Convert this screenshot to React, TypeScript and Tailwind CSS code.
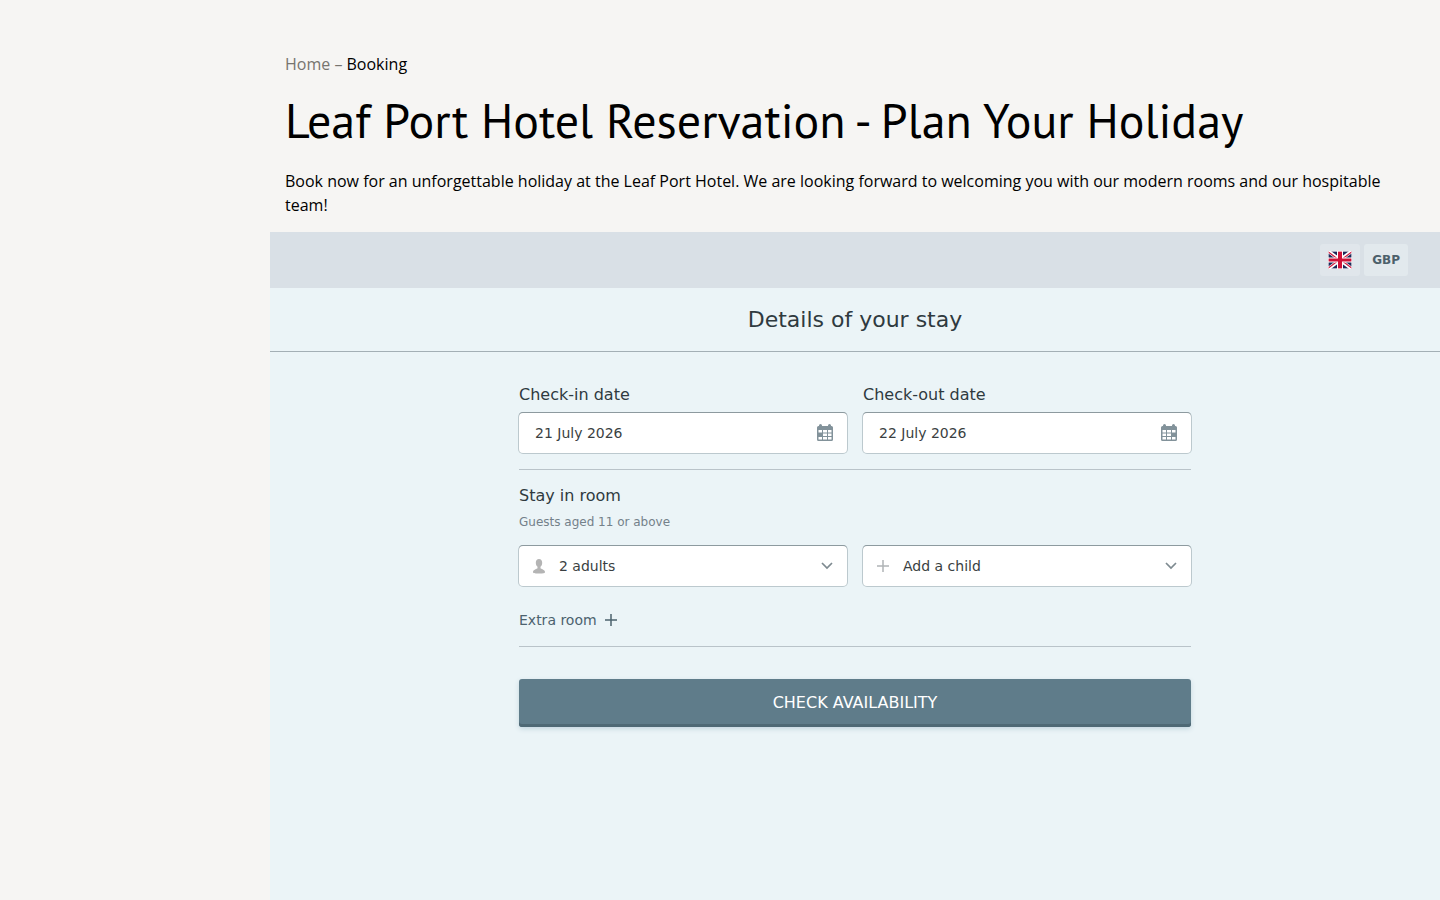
import React, { useState } from "react";

type FieldProps = {
  id: string;
  label: string;
  value: string;
  lastDay?: boolean;
};

type PickerProps = {
  label: string;
  options: string[];
  icon: React.ReactNode;
};

const CalendarIcon = ({ lastDay }: { lastDay?: boolean }) => (
  <svg width="16" height="18" viewBox="0 0 16 18" aria-hidden="true">
    <path
      fill="#82929a"
      d="M3.500 0A1.500 1.500 0 0 1 5 1.500V2h6v-.5a1.500 1.500 0 0 1 3 0V2h.5A1.500 1.500 0 0 1 16 3.500v12a1.500 1.500 0 0 1-1.500 1.500h-13A1.500 1.500 0 0 1 0 15.500v-12A1.500 1.500 0 0 1 1.500 2H2v-.5A1.500 1.500 0 0 1 3.500 0z"
    />
    <path
      fill="#fff"
      d="M1.500 6H5v2.500H1.500zM6 6h4v2.500H6zM11 6h3.500v2.500H11zM6 9.500h4V12H6zM1.500 13H5v2.500H1.500zM6 13h4v2.500H6zM11 13h3.500v2.500H11z"
    />
    {lastDay ? (
      <path fill="#fff" d="M1.500 9.500H5V12H1.500z" />
    ) : (
      <path fill="#fff" d="M11 9.500h3.500V12H11z" />
    )}
  </svg>
);

const PersonIcon = () => (
  <svg width="12" height="15" viewBox="0 0 12 15" fill="#b4b4b4" aria-hidden="true">
    <path d="M6 0c2 0 3.200 1.500 3.200 3.700C9.200 5.500 8.500 7 7.500 7.800v1.500c.3.800 4.500 1.200 4.500 3.700 0 1-1 1.500-6 1.500S0 14 0 13c0-2.500 4.200-2.900 4.500-3.700V7.800C3.500 7 2.800 5.500 2.800 3.700 2.800 1.500 4 0 6 0z" />
  </svg>
);

const PlusIcon = ({ className }: { className: string }) => (
  <svg width="12" height="12" viewBox="0 0 12 12" className={className} aria-hidden="true">
    <path d="M6 0v12M0 6h12" fill="none" stroke="currentColor" strokeWidth="1.500" />
  </svg>
);

const FlagIcon = () => (
  <svg width="24" height="18" viewBox="0 0 24 18" aria-hidden="true">
    <path fill="#1d2858" d="M0 0h24v18H0z" />
    <path stroke="#fff" strokeWidth="3.500" d="M0 0l24 18M24 0L0 18" />
    <path stroke="#cf1b3f" strokeWidth="1.200" d="M0 .7l12 9M24 17.300l-12-9M24 .7l-12 9M0 17.300l12-9" />
    <path stroke="#fff" strokeWidth="6" d="M12 0v18" />
    <path stroke="#fff" strokeWidth="5" d="M0 9h24" />
    <path stroke="#cf1137" strokeWidth="4" d="M12 0v18" />
    <path stroke="#cf1137" strokeWidth="3" d="M0 9h24" />
    <path fill="none" stroke="#fff" strokeOpacity=".6" d="M.5.5h23v17H.5z" />
  </svg>
);

const boxStyle =
  "h-10 w-full rounded bg-white text-sm text-[#3a3f42] shadow-[0_-1px_0_0_#8d9a9f,0_0_0_1px_#bcc9ce]";

const DateField = ({ id, label, value, lastDay }: FieldProps) => (
  <div>
    <label htmlFor={id} className="block leading-6">
      {label}
    </label>
    <div className="relative mt-[6px]">
      <input id={id} type="text" defaultValue={value} className={`${boxStyle} px-4`} />
      <span className="pointer-events-none absolute inset-y-0 right-[14px] flex items-center">
        <CalendarIcon lastDay={lastDay} />
      </span>
    </div>
  </div>
);

const GuestPicker = ({ label, options, icon }: PickerProps) => (
  <div className="relative">
    <select aria-label={label} className={`${boxStyle} appearance-none px-10`}>
      {options.map((option) => (
        <option key={option}>{option}</option>
      ))}
    </select>
    <span className="pointer-events-none absolute inset-y-0 left-[14px] flex items-center">
      {icon}
    </span>
    <span className="pointer-events-none absolute inset-y-0 right-[14px] flex items-center">
      <svg width="12" height="8" viewBox="0 0 12 8" aria-hidden="true">
        <path d="M1 1l5 5 5-5" fill="none" stroke="#7e8a90" strokeWidth="1.700" />
      </svg>
    </span>
  </div>
);

const App: React.FC = () => {
  const [rooms, setRooms] = useState(1);

  return (
    <div className="flex min-h-screen bg-[#f6f5f3] font-['Open_Sans',sans-serif] text-black">
      <aside className="w-[270px] shrink-0" />
      <main className="flex min-w-0 flex-1 flex-col">
        {/* Page intro */}
        <header className="px-[15px] pt-[52px] pb-[15px]">
          <nav aria-label="Breadcrumb" className="leading-6">
            <a href="#home" className="text-[#76746f]">
              Home
            </a>
            <span className="text-[#76746f]"> – </span>
            <span>Booking</span>
          </nav>
          <h1 className="mt-[14px] mb-[19px] font-['PT_Sans','Noto_Sans',sans-serif] text-5xl leading-[60px]">
            Leaf Port Hotel Reservation - Plan Your Holiday
          </h1>
          <p className="leading-6">
            Book now for an unforgettable holiday at the Leaf Port Hotel. We are looking forward to
            welcoming you with our modern rooms and our hospitable team!
          </p>
        </header>

        {/* Booking widget */}
        <section className="flex-1 bg-[#ebf4f7] font-['DejaVu_Sans',sans-serif] text-[#2f3a3f]">
          <div className="flex h-14 items-center justify-end gap-1 bg-[#d9e0e6] pr-8">
            <button
              type="button"
              aria-label="Language"
              className="flex h-8 w-10 items-center justify-center rounded-[3px] bg-[#e0e6eb]"
            >
              <FlagIcon />
            </button>
            <button
              type="button"
              className="h-8 rounded-[3px] bg-[#e2e9ed] px-2 text-xs font-bold text-[#4c606b]"
            >
              GBP
            </button>
          </div>
          <h2 className="border-b border-[#a3afb5] text-center text-[22px] leading-[63px]">
            Details of your stay
          </h2>

          <form className="mx-auto max-w-[672px] pt-[31px]" onSubmit={(e) => e.preventDefault()}>
            <div className="grid grid-cols-2 gap-4 border-b border-[#b9c3c9] pb-4">
              <DateField id="checkin" label="Check-in date" value="21 July 2026" />
              <DateField id="checkout" label="Check-out date" value="22 July 2026" lastDay />
            </div>

            <div className="border-b border-[#b9c3c9] pt-[14px] pb-[14px]">
              <h3 className="leading-6">Stay in room</h3>
              <p className="mt-[6px] text-xs text-[#74818a]">Guests aged 11 or above</p>
              {Array.from({ length: rooms }, (_, i) => (
                <div key={i} className="mt-4 grid grid-cols-2 gap-4">
                  <GuestPicker
                    label="Adults"
                    options={["2 adults", "1 adult", "3 adults"]}
                    icon={<PersonIcon />}
                  />
                  <GuestPicker
                    label="Children"
                    options={["Add a child", "1 child", "2 children"]}
                    icon={<PlusIcon className="text-[#b0b4b6]" />}
                  />
                </div>
              ))}
              <button
                type="button"
                onClick={() => setRooms(rooms + 1)}
                className="mt-[22px] flex h-6 items-center gap-2 text-sm text-[#4c626e]"
              >
                Extra room
                <PlusIcon className="text-[#4c626e]" />
              </button>
            </div>

            <button
              type="submit"
              className="mt-8 h-12 w-full rounded-[3px] bg-[#5f7c8a] text-white shadow-[inset_0_-3px_0_0_#4f6975,0_2px_5px_0_#c4d6df]"
            >
              CHECK AVAILABILITY
            </button>
          </form>
        </section>
      </main>
    </div>
  );
};

export default App;
